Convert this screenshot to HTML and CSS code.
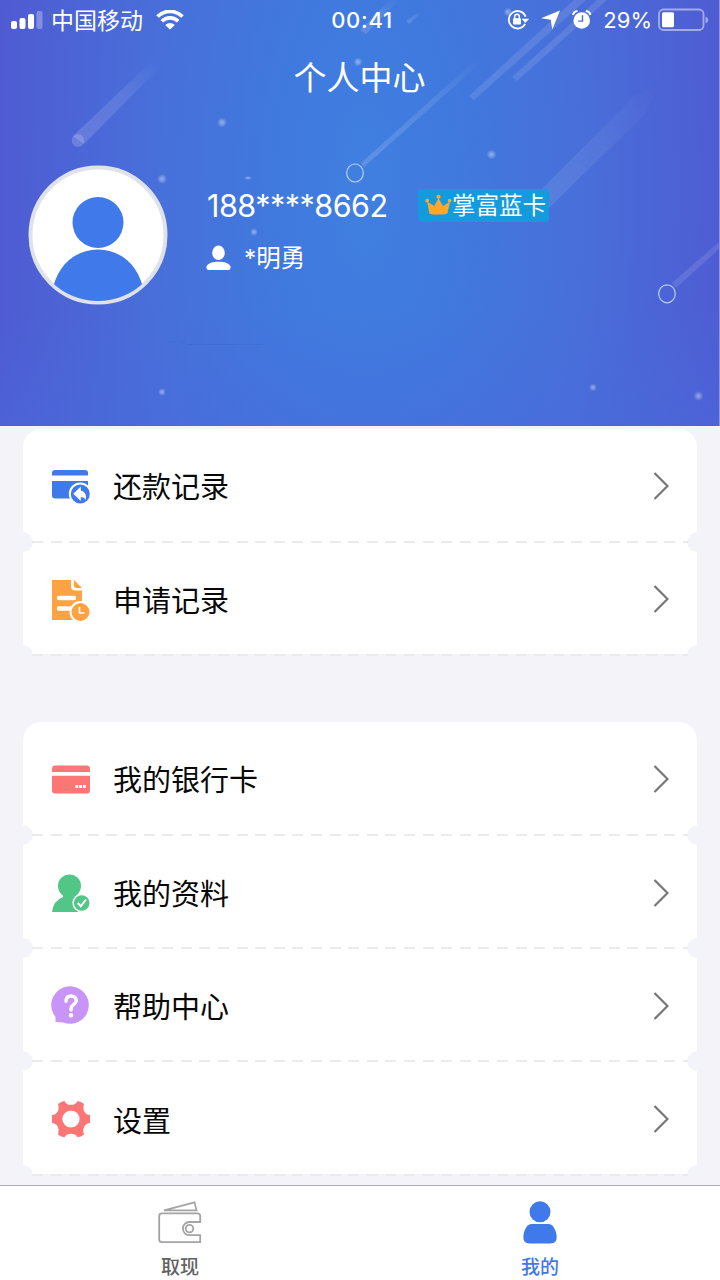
FILE: index.html
```html
<!DOCTYPE html>
<html lang="zh-CN">
<head>
<meta charset="utf-8">
<title>个人中心</title>
<link rel="stylesheet" href="styles.css">
</head>
<body>
<div class="app">
  <header class="hero">
    <svg class="hero-sky" viewBox="0 0 719 426" width="719" height="426">
      <defs>
        <linearGradient id="trail" x1="0" y1="1" x2="1" y2="0"><stop offset="0" stop-color="#fff" stop-opacity=".15"/><stop offset=".6" stop-color="#fff" stop-opacity=".1"/><stop offset="1" stop-color="#fff" stop-opacity="0"/></linearGradient>
        <linearGradient id="haze" x1="0" y1="1" x2="1" y2="0"><stop offset="0" stop-color="#fff" stop-opacity=".1"/><stop offset=".5" stop-color="#fff" stop-opacity=".06"/><stop offset="1" stop-color="#fff" stop-opacity="0"/></linearGradient>
        <radialGradient id="star"><stop offset="0" stop-color="#fff" stop-opacity=".42"/><stop offset=".4" stop-color="#fff" stop-opacity=".28"/><stop offset="1" stop-color="#fff" stop-opacity="0"/></radialGradient>
      </defs>
      <g fill="url(#trail)">
        <path d="M73 136 150 63 160 67 84 144Z"/>
        <path d="M361 163 472 63 483 58 477 66 364 167Z"/>
        <path d="M406 21 421 11 419 15 409 24Z"/>
        <path d="M360 30 390 0 399 0 366 34Z"/>
      </g>
      <g fill="#fff" fill-opacity=".11">
        <path d="M469 96 574 0 586 0 474 100Z"/>
        <path d="M512 77 597 0 607 0 517 81Z"/>
        <path d="M672 283 719 242 719 249 676 288Z"/>
      </g>
      <path d="M543 188 634 96 660 85 645 114 549 208Z" fill="url(#haze)"/>
      <circle cx="78" cy="140.500" r="6.300" fill="#fff" fill-opacity=".18"/>
      <g fill="none" stroke="#b9d0f5" stroke-width="1.200">
        <ellipse cx="355" cy="173" rx="8.300" ry="9"/>
        <ellipse cx="667" cy="293.800" rx="8.300" ry="9"/>
      </g>
      <g fill="url(#star)">
        <circle cx="222" cy="122.500" r="5"/><circle cx="162" cy="179" r="5"/><circle cx="491.500" cy="154.500" r="5"/>
        <circle cx="254" cy="232" r="4"/><circle cx="162" cy="392" r="4"/><circle cx="593" cy="387.500" r="4"/>
        <circle cx="698.500" cy="396" r="5"/><circle cx="508" cy="12" r="4.500"/><circle cx="358" cy="62" r="4.500"/>
        <ellipse cx="248" cy="178" rx="4" ry="2"/>
      </g>
      <path d="M170 342h6M181 342h5M187 344.500h76" stroke="#3262c0" stroke-opacity=".3" stroke-width="1"/>
    </svg>

    <div class="status">
      <div class="status-left">
        <svg class="signal" width="32" height="20" viewBox="0 0 32 20" fill="#fff"><rect y="11" width="6" height="8" rx="2"/><rect x="8.500" y="8" width="6" height="11" rx="2"/><rect x="17" y="4" width="6" height="15" rx="2"/><rect x="25.500" y="1" width="6" height="18" rx="2" opacity=".3"/></svg>
        <span class="carrier">中国移动</span>
        <svg class="wifi" width="28" height="20" viewBox="0 0 28 20"><g fill="none" stroke="#fff" stroke-width="3.600"><path d="M1.500 6.600A17.500 17.500 0 0 1 26.500 6.600"/><path d="M5.800 11.300A11.500 11.500 0 0 1 22.200 11.300"/></g><path d="M9.200 15Q14 11 18.800 15L14 19.500Z" fill="#fff"/></svg>
      </div>
      <span class="clock">00:41</span>
      <div class="status-right">
        <svg class="lock" width="23" height="20" viewBox="0 0 23 20"><path d="M18.200 13.800A8.700 8.700 0 1 1 18.600 6.600" fill="none" stroke="#fff" stroke-width="1.800"/><path d="M14.600 8.800H22.200L18.300 13Z" fill="#fff"/><rect x="6" y="8.200" width="8" height="6.400" rx="1" fill="#fff"/><path d="M7.700 9V6.500a2.300 2.300 0 0 1 4.600 0V9" fill="none" stroke="#fff" stroke-width="1.500"/></svg>
        <svg class="arrow" width="20" height="20" viewBox="0 0 20 20"><path d="M19 .500 11.300 19.500 9.700 9.700 0 8.200Z" fill="#fff"/></svg>
        <svg class="alarm" width="20" height="20" viewBox="0 0 20 20"><circle cx="9.700" cy="10.500" r="8.300" fill="#fff"/><path d="M1 5Q1.500 1.500 5.500 1M18.400 5Q17.900 1.500 13.900 1" fill="none" stroke="#fff" stroke-width="2"/><path d="M10.500 5.300V11.100H6.200" fill="none" stroke="#496bd8" stroke-width="1.400"/></svg>
        <span class="percent">29%</span>
        <svg class="battery" width="52" height="24" viewBox="0 0 52 24"><rect x="1" y="1.500" width="44.500" height="20.500" rx="4.500" fill="none" stroke="#fff" stroke-opacity=".48" stroke-width="1.800"/><rect x="4" y="4.300" width="12" height="15" rx="1.500" fill="#fff"/><path d="M47.500 8.500Q50.300 9.500 50.300 12T47.500 15.500Z" fill="#fff" fill-opacity=".48"/></svg>
      </div>
    </div>

    <h1 class="title">个人中心</h1>

    <div class="profile">
      <svg class="avatar" width="140" height="140" viewBox="0 0 140 140"><defs><clipPath id="face"><circle cx="70" cy="70" r="66"/></clipPath></defs><circle cx="70" cy="70" r="67.500" fill="#fff" stroke="#e0e2ea" stroke-width="4"/><g fill="#3f79ea" clip-path="url(#face)"><circle cx="70" cy="57.500" r="25.500"/><path d="M24 140V128C28 101 47 84.500 70 84.500S112 101 116 128V140Z"/></g></svg>
      <div class="identity">
        <div class="phone-line">
          <span class="phone">188****8662</span>
          <div class="badge">
            <svg class="crown" width="27" height="21" viewBox="0 0 28 22" fill="#ffa62d"><path d="M4.500 20.500 2.200 8 9.500 12.500 14 4.500 18.700 12.500 26 8 23.500 20Q21.500 22 14 21.500 6.500 22 4.500 20.500Z"/><circle cx="2.200" cy="7" r="2"/><circle cx="14" cy="3" r="2.200"/><circle cx="25.600" cy="7" r="2"/></svg>
            <span class="tier">掌富蓝卡</span>
          </div>
        </div>
        <div class="name-line">
          <svg width="25" height="26" viewBox="0 0 25 26" fill="#fff"><ellipse cx="12.500" cy="7.800" rx="6.300" ry="7.300"/><path d="M.500 21.500C2 18 7 16.800 12.500 16.800S23 18 24.500 21.500Q25 25 22 25H3Q0 25 .500 21.500Z"/></svg>
          <span class="name">*明勇</span>
        </div>
      </div>
    </div>
  </header>

  <main class="menu">
    <section class="card">
      <a class="row">
        <svg class="icon" viewBox="0 0 40 44" width="40" height="44"><path d="M1 11.500V9Q1 6 4 6H34Q37 6 37 9V11.500Z" fill="#3f79ea"/><path d="M1 17H37V34.500H4Q1 34.500 1 31.500Z" fill="#3f79ea"/><circle cx="29.300" cy="30" r="10.500" fill="#3f79ea" stroke="#fff" stroke-width="2"/><path d="M22.300 29.800 29.800 22.500V26.500C34 27.500 36 31 34.500 36 33.500 33.800 32 33.300 29.800 33.300V37Z" fill="#fff"/></svg>
        <span class="label">还款记录</span>
        <svg class="chevron" viewBox="0 0 16 28" width="16" height="28"><path d="M1.500 1 14.500 14 1.500 27"/></svg>
      </a>
      <a class="row">
        <svg class="icon" viewBox="0 0 40 44" width="40" height="44"><path d="M1 3H20V9Q20 13.500 24 13.500H31V43H1Z" fill="#ffa243"/><path d="M23 3 31 11H25.500Q23 11 23 8.500Z" fill="#ffa243"/><path d="M8 21H23M8 31.500H19" stroke="#fff" stroke-width="4.400" stroke-linecap="round"/><circle cx="29.500" cy="35" r="10" fill="#ffa243" stroke="#fff" stroke-width="2"/><path d="M28.500 30V36H33.500" fill="none" stroke="#fff" stroke-width="1.600"/></svg>
        <span class="label">申请记录</span>
        <svg class="chevron" viewBox="0 0 16 28" width="16" height="28"><path d="M1.500 1 14.500 14 1.500 27"/></svg>
      </a>
    </section>

    <section class="card">
      <a class="row">
        <svg class="icon" viewBox="0 0 40 44" width="40" height="44" fill="#fc7676"><path d="M1 15V12Q1 8.500 4 8.500H36Q39 8.500 39 12V15Z"/><path d="M1 18.800H39V33Q39 36.500 36 36.500H4Q1 36.500 1 33Z"/><path d="M24.500 28h2.800v3h-2.800zM28.300 28h2.800v3h-2.800zM32.100 28h2.800v3h-2.800z" fill="#fff"/></svg>
        <span class="label">我的银行卡</span>
        <svg class="chevron" viewBox="0 0 16 28" width="16" height="28"><path d="M1.500 1 14.500 14 1.500 27"/></svg>
      </a>
      <a class="row">
        <svg class="icon" viewBox="0 0 40 44" width="40" height="44"><circle cx="18.500" cy="15" r="11.500" fill="#52c686"/><path d="M1 41Q2.500 29.500 12 26V20H25V26L31 34V41Z" fill="#52c686"/><circle cx="30.700" cy="32" r="9.300" fill="#fff"/><circle cx="30.700" cy="32" r="7.800" fill="#52c686"/><path d="M26.700 32 29.800 35.300 35 28.500" fill="none" stroke="#fff" stroke-width="2"/></svg>
        <span class="label">我的资料</span>
        <svg class="chevron" viewBox="0 0 16 28" width="16" height="28"><path d="M1.500 1 14.500 14 1.500 27"/></svg>
      </a>
      <a class="row">
        <svg class="icon" viewBox="0 0 40 44" width="40" height="44"><path d="M4.500 38V33A18.800 18.800 0 1 1 12 38.500Z" fill="#c994f8"/><path d="M15 17.300C15 13.500 17 12 20 12S25.300 14 25.300 16.700C25.300 20.500 20 20.300 20 25V26" fill="none" stroke="#fff" stroke-width="3.400" stroke-linecap="round"/><circle cx="20" cy="31.300" r="2.200" fill="#fff"/></svg>
        <span class="label">帮助中心</span>
        <svg class="chevron" viewBox="0 0 16 28" width="16" height="28"><path d="M1.500 1 14.500 14 1.500 27"/></svg>
      </a>
      <a class="row">
        <svg class="icon" viewBox="0 0 40 44" width="40" height="44"><path d="M13.500 4C15 7.200 17 7.800 20 7.800S25 7.200 26.500 4Q30 4.500 33 7C31 13 34 18 39 18V26C34 26 31 31 33 37.500Q30 40 26.500 40.300C25 37.500 23 36.800 20 36.800S15 37.500 13.500 40.300Q10 40 7 37.500C9 31 6 26 1 26V18C6 18 9 13 7 7Q10 4.500 13.500 4Z" fill="#fc7676"/><circle cx="20" cy="22" r="8.600" fill="#fff"/></svg>
        <span class="label">设置</span>
        <svg class="chevron" viewBox="0 0 16 28" width="16" height="28"><path d="M1.500 1 14.500 14 1.500 27"/></svg>
      </a>
    </section>
  </main>

  <nav class="tabs">
    <a class="tab">
      <svg width="44" height="44" viewBox="0 0 44 44" fill="none" stroke="#a4a4a4" stroke-width="1.800"><path d="M6 9.300 36.500 1.300 38.500 9.300Z"/><path d="M42.200 21V15Q42.200 12.300 39.500 12.300H4Q1.200 12.300 1.200 15V38.500Q1.200 41.200 4 41.200H42.200V34.200H31.500A6.600 6.600 0 0 1 31.500 21Z"/><circle cx="31.500" cy="27.600" r="3.800"/></svg>
      <span>取现</span>
    </a>
    <a class="tab tab-active">
      <svg width="44" height="44" viewBox="0 0 44 44" fill="#3f79ea"><circle cx="22" cy="10.800" r="10.500"/><path d="M14 23H30C36 23 38.500 31 38.700 36Q38.700 42.500 32.500 42.500H11.500Q5.300 42.500 5.300 36C5.500 31 8 23 14 23Z"/></svg>
      <span>我的</span>
    </a>
  </nav>
</div>
</body>
</html>
```
FILE: styles.css
```css
* { box-sizing: border-box; }

body {
  margin: 0;
  background: #f3f3f9;
  font-family: Inter, "Noto Sans CJK SC", sans-serif;
}

svg { display: block; flex: none; }

.app {
  display: flex;
  flex-direction: column;
  width: 720px;
  height: 1280px;
  overflow: hidden;
}

.hero {
  position: relative;
  flex: none;
  width: 719px;
  height: 426px;
  color: #fff;
  background:
    linear-gradient(to bottom, rgba(72, 108, 220, 0) 72%, rgba(72, 108, 220, .45)),
    radial-gradient(ellipse 375px 900px at 365px 190px, #407fe0 0, #4079de 25%, #4870da 55%, #4e5fd4 90%, #505ad2 100%);
  box-shadow: 1px 0 #8f95e2;
}

.hero-sky {
  position: absolute;
  inset: 0;
}

.status {
  position: relative;
  display: grid;
  grid-template-columns: 1fr auto 1fr;
  height: 40px;
  padding: 0 9px 0 11px;
  align-items: center;
}

.status-left,
.status-right {
  display: flex;
  align-items: center;
}

.status-right { justify-content: flex-end; }

.carrier {
  margin: 0 13px 0 8px;
  padding-top: 2px;
  font-size: 23px;
  line-height: 38px;
}

.clock {
  margin-left: 3px;
  font-size: 22px;
  font-weight: 500;
  letter-spacing: .7px;
}

.arrow { margin-left: 11px; }
.alarm { margin-left: 11px; }

.percent {
  margin: 0 6px 0 11px;
  font-size: 22px;
}

.title {
  position: relative;
  margin: 14px 0 0;
  font-size: 33px;
  font-weight: 400;
  line-height: 48px;
  text-align: center;
}

.profile {
  position: relative;
  display: flex;
  align-items: flex-start;
  padding: 62.500px 0 0 28px;
}

.identity { padding: 24px 0 0 38px; }

.phone-line {
  display: flex;
  align-items: center;
  height: 33px;
}

.phone {
  width: 212px;
  padding-left: 1px;
  font-size: 30.500px;
  letter-spacing: -.5px;
  white-space: nowrap;
}

.badge {
  display: flex;
  align-items: center;
  width: 131px;
  height: 33px;
  padding-left: 7px;
  border-radius: 4px;
  background: #129bdd;
  font-size: 23.500px;
  line-height: 30px;
  white-space: nowrap;
}

.tier { padding-top: 2px; }

.crown { margin-top: -2px; }

.name-line {
  display: flex;
  align-items: center;
  margin-top: 16px;
  height: 40px;
}

.name {
  margin-left: 13px;
  font-size: 24.500px;
  line-height: 40px;
}

.menu {
  flex: none;
  height: 759px;
  padding: 2.500px 23px 0;
}

.card { margin-bottom: 66px; }

.row {
  --notch: #f3f4fa 9.500px, transparent 10px;
  --dashes: repeating-linear-gradient(to right, #ebebed 0 11px, transparent 11px 18.600px) 9px 100% / calc(100% - 18px) 2px no-repeat;
  display: flex;
  align-items: center;
  height: 113.200px;
  background:
    var(--dashes),
    radial-gradient(circle at 0 -1px, var(--notch)),
    radial-gradient(circle at 100% -1px, var(--notch)),
    radial-gradient(circle at 0 calc(100% - 1px), var(--notch)),
    radial-gradient(circle at 100% calc(100% - 1px), var(--notch)),
    #fff;
  padding: 0 28px;
}

.row:first-child {
  height: 114.200px;
  border-radius: 18px 18px 0 0;
  background:
    var(--dashes),
    radial-gradient(circle at 0 calc(100% - 1px), var(--notch)),
    radial-gradient(circle at 100% calc(100% - 1px), var(--notch)),
    #fff;
}

.row:last-child {
  background:
    var(--dashes),
    linear-gradient(#f3f3f9, #f3f3f9) 0 100% / 100% 2px no-repeat,
    radial-gradient(circle at 0 -1px, var(--notch)),
    radial-gradient(circle at 100% -1px, var(--notch)),
    radial-gradient(circle at 0 calc(100% - 1px), var(--notch)),
    radial-gradient(circle at 100% calc(100% - 1px), var(--notch)),
    #fff;
}

.label {
  flex: 1;
  margin-left: 22px;
  padding-top: 5px;
  color: #080808;
  font-size: 29px;
  line-height: 44px;
}

.chevron {
  fill: none;
  stroke: #777;
  stroke-width: 2.200px;
}

.tabs {
  display: flex;
  flex: none;
  height: 95px;
  border-top: 1px solid #adadb1;
  background: #fff;
}

.tab {
  display: flex;
  flex: 1;
  flex-direction: column;
  align-items: center;
  padding-top: 15px;
  color: #626262;
  font-size: 19px;
  font-weight: 500;
  line-height: 28px;
}

.tab span { margin-top: 9px; }

.tab-active { color: #3f79ea; }
```
